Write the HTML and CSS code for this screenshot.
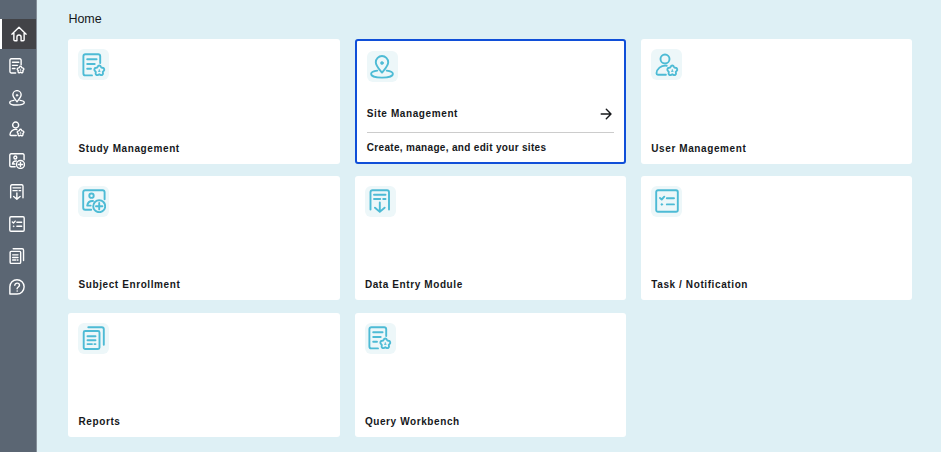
FILE: index.html
```html
<!DOCTYPE html>
<html lang="en">
<head>
<meta charset="utf-8">
<title>Home</title>
<link rel="stylesheet" href="styles.css">
</head>
<body>
<svg class="sprite" width="0" height="0" aria-hidden="true">
  <symbol id="star" viewBox="0 0 24 24">
    <path d="M15.700 13.600c.6-1.500 2.600-1.500 3.200 0l.5 1 1.200.2c1.600.2 2.200 2 1.100 3.100l-.9.900.2 1.300c.2 1.600-1.300 2.500-2.600 1.800l-1.100-.6-1.100.6c-1.300.7-2.800-.2-2.600-1.800l.2-1.300-.9-.9c-1.100-1.100-.5-2.900 1.100-3.100l1.200-.2z"/>
    <path d="M17.300 16.700v1.300M16.500 18.300h1.600" stroke-width="1"/>
  </symbol>
  <symbol id="home" viewBox="0 0 24 24">
    <path d="M1.300 12.200 12 1.700l10.700 10.500M4.300 10.500v10.300c0 .9.500 1.400 1.400 1.400h3.200v-5.600c0-4 6.200-4 6.200 0v5.600h3.200c.9 0 1.400-.5 1.400-1.400V10.500"/>
  </symbol>
  <symbol id="study" viewBox="0 0 24 24">
    <path d="M18.200 10V3.200c0-1.300-.7-2-2-2H3.400c-1.300 0-2 .7-2 2v17.200c0 1.300.7 2 2 2H10M5.200 6.300h9.400M5.200 11h7.500M5.200 15.800H9"/>
    <use href="#star"/>
  </symbol>
  <symbol id="site" viewBox="0 0 24 24">
    <path d="M12 17.600C9 14 5.800 10.700 5.800 7.200a6.200 6.200 0 0 1 12.400 0C18.200 10.700 15 14 12 17.600zM7.300 15.600C3.700 16 1.100 17.300 1.100 19c0 2 4.600 3.600 10.900 3.600S22.900 21 22.900 19c0-1.700-2.600-3-6.200-3.400"/>
    <circle class="dot" cx="12" cy="8" r="1.500"/>
  </symbol>
  <symbol id="user" viewBox="0 0 24 24">
    <circle cx="10" cy="6" r="4.500"/>
    <path d="M11.700 12.700C5.900 12 1.700 16 1.500 20.300c0 1 .5 1.500 1.400 1.500h8"/>
    <use href="#star"/>
  </symbol>
  <symbol id="subject" viewBox="0 0 24 24">
    <path d="M22.600 10.200V3.200c0-1.300-.7-2-2-2H3.200c-1.300 0-2 .7-2 2v15.500c0 1.300.7 2 2 2h6M11 12c-3.200-.2-5.200 1-5.800 4.600h3.500"/>
    <circle cx="9.500" cy="6.700" r="2.200"/>
    <circle cx="17.200" cy="17.200" r="6"/>
    <path d="M17.200 14v6.400M14 17.200h6.400"/>
  </symbol>
  <symbol id="entry" viewBox="0 0 24 24">
    <path d="M2.500 20.600V3.200c0-1.300.7-2 2-2H19c1.300 0 2 .7 2 2v17.400M6 5.800h11.500M6 10h6.200M15.200 10h2.300M11.800 13.500v9.200M7 18.700l4.800 4.200 4.800-4.200"/>
  </symbol>
  <symbol id="task" viewBox="0 0 24 24">
    <rect x="1.200" y="1.200" width="21.600" height="21.600" rx="1.800"/>
    <path d="m5 9 1.700 1.500L9.300 7.700M11.800 9.300h7.200M11.800 15.400h7.200"/>
    <circle class="dot" cx="6.800" cy="15.400" r=".9"/>
  </symbol>
  <symbol id="reports" viewBox="0 0 24 24">
    <path d="M6.300 1.200h13.500c1.300 0 2 .7 2 2v15.500"/>
    <rect x="1.700" y="5" width="15.800" height="18" rx="1.500"/>
    <path d="M5.500 10.300h8M5.500 14.200h8M5.500 18.100h4.500M12.400 18.100h1.100"/>
  </symbol>
  <symbol id="help" viewBox="0 0 24 24">
    <path d="M1.300 22.500V11.800A10.700 10.700 0 1 1 12 22.500zM8.700 9.500c0-4.500 7-4.200 7-.2 0 2.800-3.600 2.500-3.600 5.400"/>
    <circle class="dot" cx="12.100" cy="18" r=".7"/>
  </symbol>
</svg>
<div class="app">
  <nav class="sidebar">
    <a class="nav-item active"><svg><use href="#home"/></svg></a>
    <a class="nav-item"><svg><use href="#study"/></svg></a>
    <a class="nav-item"><svg><use href="#site"/></svg></a>
    <a class="nav-item"><svg><use href="#user"/></svg></a>
    <a class="nav-item"><svg><use href="#subject"/></svg></a>
    <a class="nav-item"><svg><use href="#entry"/></svg></a>
    <a class="nav-item"><svg><use href="#task"/></svg></a>
    <a class="nav-item"><svg><use href="#reports"/></svg></a>
    <a class="nav-item"><svg><use href="#help"/></svg></a>
  </nav>
  <main class="content">
    <h1 class="page-title">Home</h1>
    <div class="cards">
      <section class="card"><span class="tile"><svg><use href="#study"/></svg></span><h2 class="name">Study Management</h2></section>
      <section class="card selected">
        <span class="tile"><svg><use href="#site"/></svg></span>
        <div class="heading">
          <h2 class="name">Site Management</h2>
          <svg class="arrow" viewBox="0 0 12 12"><path d="M1.200 6h9.600M6.300 1.300 11 6l-4.700 4.700"/></svg>
        </div>
        <p class="description">Create, manage, and edit your sites</p>
      </section>
      <section class="card"><span class="tile"><svg><use href="#user"/></svg></span><h2 class="name">User Management</h2></section>
      <section class="card"><span class="tile"><svg><use href="#subject"/></svg></span><h2 class="name">Subject Enrollment</h2></section>
      <section class="card"><span class="tile"><svg><use href="#entry"/></svg></span><h2 class="name">Data Entry Module</h2></section>
      <section class="card"><span class="tile"><svg><use href="#task"/></svg></span><h2 class="name">Task / Notification</h2></section>
      <section class="card"><span class="tile"><svg><use href="#reports"/></svg></span><h2 class="name">Reports</h2></section>
      <section class="card"><span class="tile"><svg><use href="#study"/></svg></span><h2 class="name">Query Workbench</h2></section>
    </div>
  </main>
</div>
</body>
</html>
```

FILE: styles.css
```css
* { box-sizing: border-box; }
body {
  margin: 0;
  background: #def0f5;
  color: #16181b;
  font-family: "Liberation Sans", Arial, sans-serif;
  overflow: hidden;
}
h1, h2, p { margin: 0; }
svg {
  display: block;
  fill: none;
  stroke: currentColor;
  stroke-width: 1.9;
  stroke-linecap: round;
  stroke-linejoin: round;
}
.sprite { position: absolute; }
.dot { fill: currentColor; stroke-width: .6; }
.app { display: flex; height: 452px; }
.sidebar {
  width: 37px;
  padding-top: 19px;
  background: #5b6673;
  border-right: 1px solid #858f99;
  color: #fff;
}
.nav-item {
  display: flex;
  align-items: center;
  justify-content: center;
  height: 31.6px;
  padding-right: 2px;
}
.nav-item svg { width: 16px; height: 16px; stroke-width: 2.1; }
.nav-item.active {
  height: 30px;
  margin-bottom: 1.300px;
  padding: 0;
  background: #424347;
  border-left: 2px solid #fff;
}
.content { flex: 1; padding: 12px 28px 0 31.400px; }
.page-title {
  height: 27px;
  font-size: 12.500px;
  font-weight: 400;
  line-height: 15px;
}
.cards {
  display: grid;
  grid-template-columns: repeat(3, 271.300px);
  grid-auto-rows: 124.500px;
  gap: 12.300px 15.100px;
}
.card {
  display: flex;
  flex-direction: column;
  justify-content: space-between;
  padding: 10px 10.100px 9px;
  background: #fff;
  border-radius: 3px;
}
.tile {
  display: grid;
  place-items: center;
  width: 31px;
  height: 31px;
  border-radius: 6px;
  background: #edf7f9;
  color: #4dbbd5;
}
.tile svg { width: 24px; height: 24px; }
.name {
  font-size: 10px;
  line-height: 12px;
  font-weight: 700;
  letter-spacing: .6px;
}
.selected {
  justify-content: flex-start;
  padding: 10px 9.700px 0 10px;
  border: 2px solid #104fd8;
}
.heading {
  display: flex;
  align-items: center;
  justify-content: space-between;
  height: 37px;
  margin-top: 13.500px;
  padding-right: 2px;
  border-bottom: 1px solid #ccc;
}
.arrow { width: 12px; height: 12px; stroke-width: 1.400; }
.description {
  margin-top: 9px;
  font-size: 10px;
  font-weight: 700;
  line-height: 12px;
  letter-spacing: .32px;
}
```
